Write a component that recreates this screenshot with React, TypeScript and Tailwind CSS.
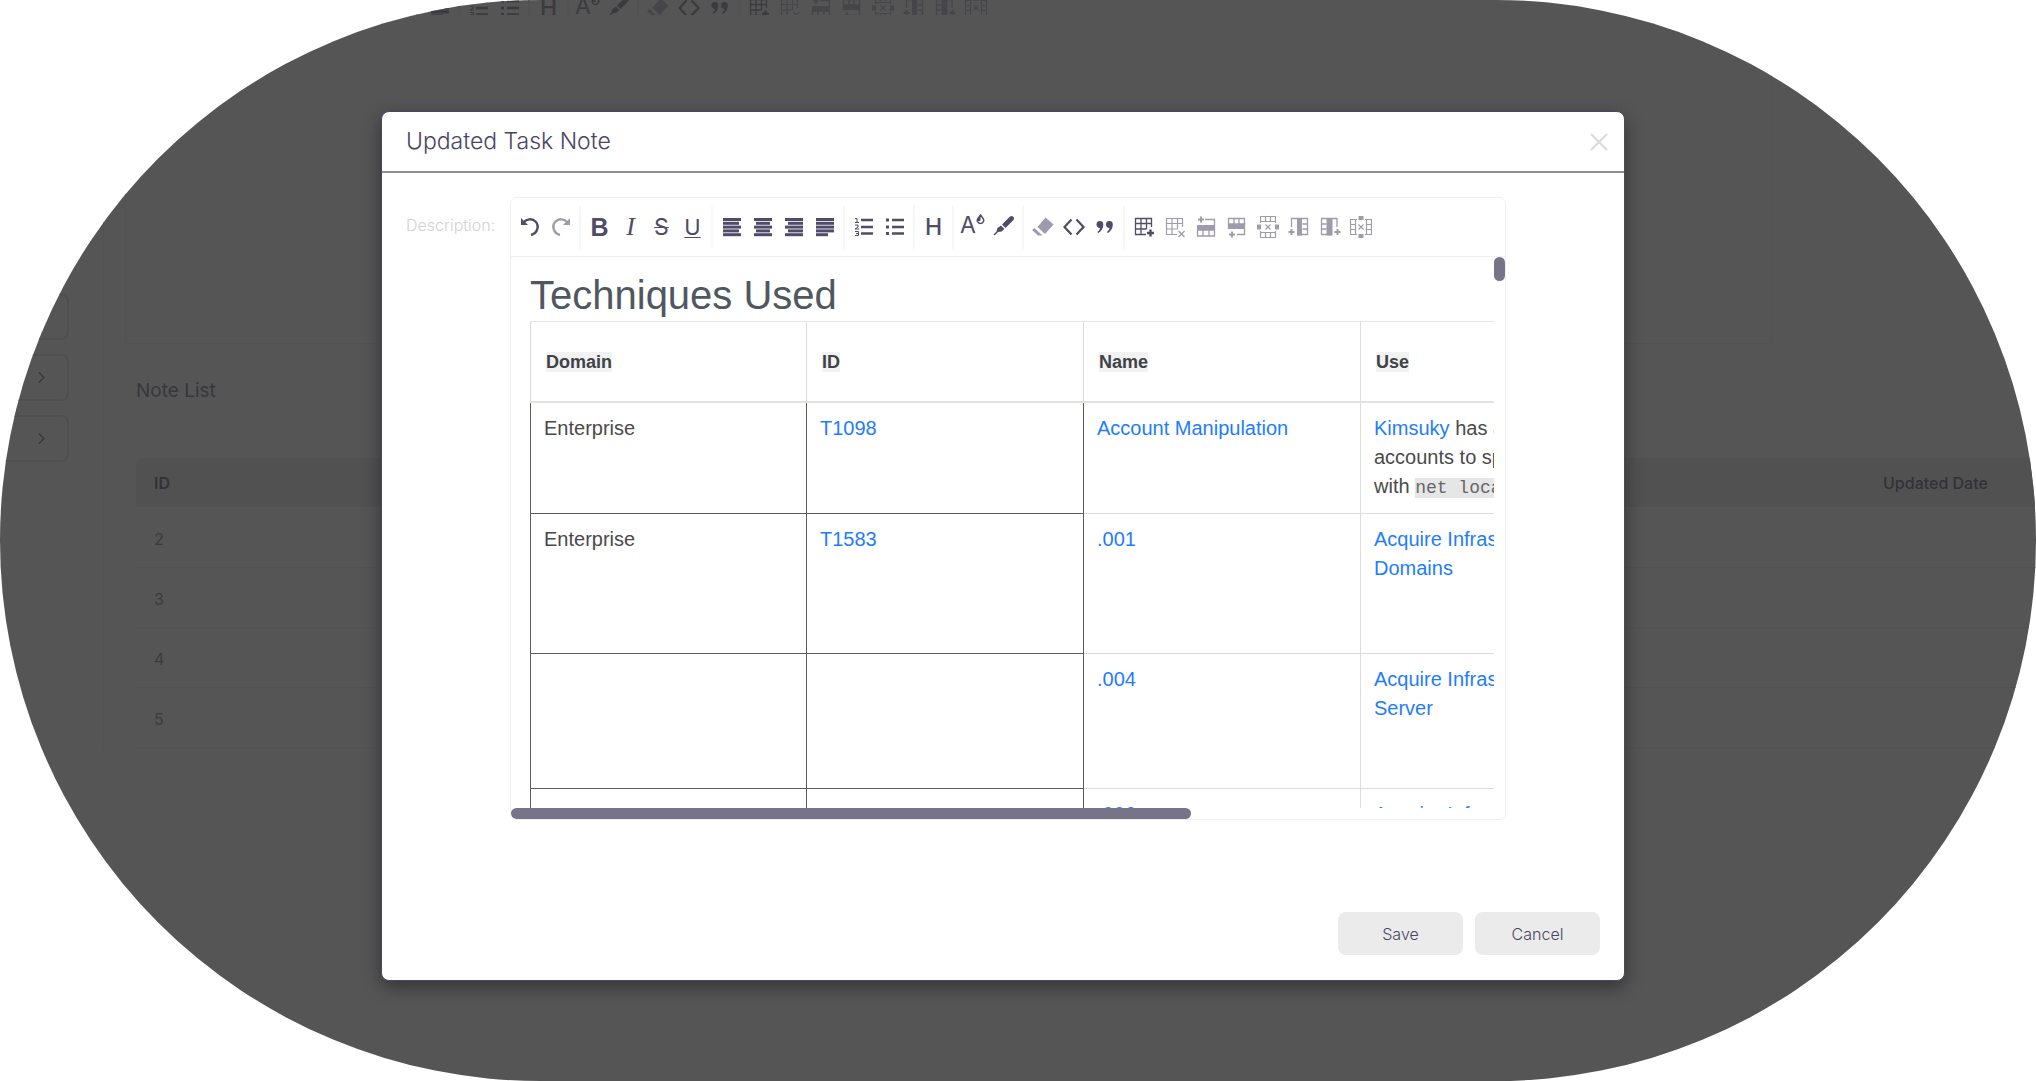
import { ReactNode } from "react";
import { ChevronRight } from "lucide-react";

interface Tool {
  name: string;
  icon: ReactNode;
  dim?: boolean;
}

const Svg = ({ children }: { children: ReactNode }) => (
  <svg width="22" height="22" viewBox="0 0 22 22" fill="none" stroke="currentColor" aria-hidden="true">
    {children}
  </svg>
);

// five stacked bars, each given as [x, width]
const Bars = ({ bars }: { bars: number[][] }) => (
  <Svg>
    {bars.map(([x, w], i) => (
      <rect key={i} x={x} y={2 + i * 3.8} width={w} height="3" fill="currentColor" stroke="none" />
    ))}
  </Svg>
);

const GROUPS: Tool[][] = [
  [
    {
      name: "Undo",
      icon: (
        <Svg>
          <path d="M2 2v7h7z" fill="currentColor" stroke="none" />
          <path d="M4.5 6.5C7.5 3 13 2 16.5 5.5s3 11.5-4.5 13.5" strokeWidth="2.4" />
        </Svg>
      ),
    },
    {
      name: "Redo",
      dim: true,
      icon: (
        <Svg>
          <path d="M20 2v7h-7z" fill="currentColor" stroke="none" />
          <path d="M17.5 6.5C14.5 3 9 2 5.5 5.5s-3 11.5 4.5 13.5" strokeWidth="2.4" />
        </Svg>
      ),
    },
  ],
  [
    { name: "Bold", icon: <span className="font-['Liberation_Sans'] text-[25px] font-bold">B</span> },
    { name: "Italic", icon: <span className="font-['Liberation_Serif'] text-[26px] italic">I</span> },
    { name: "Strike", icon: <span className="font-['Inter'] text-[23px] line-through decoration-1">S</span> },
    {
      name: "Underline",
      icon: <span className="font-['Inter'] text-[22px] underline decoration-1 underline-offset-2">U</span>,
    },
  ],
  [
    { name: "Align left", icon: <Bars bars={[[2, 18], [2, 16], [2, 18], [2, 16], [2, 18]]} /> },
    { name: "Align center", icon: <Bars bars={[[2, 18], [4, 14], [2, 18], [4, 14], [2, 18]]} /> },
    { name: "Align right", icon: <Bars bars={[[2, 18], [5, 15], [2, 18], [5, 15], [2, 18]]} /> },
    { name: "Justify", icon: <Bars bars={[[2, 18], [2, 18], [2, 18], [2, 18], [2, 12]]} /> },
  ],
  [
    {
      name: "Ordered list",
      icon: (
        <Svg>
          <path d="M8 4h12M8 11h12M8 17.5h12" strokeWidth="2.4" />
          <path d="M2 2.5h2v4M2 6.5h4M2 9h3v2L2 13h4M2 15.5h3.5v4H2M3 17.5h2" strokeWidth="1" />
        </Svg>
      ),
    },
    {
      name: "Unordered list",
      icon: (
        <Svg>
          <path d="M8 4h12M8 11h12M8 17.5h12" strokeWidth="2.4" />
          <path d="M2 4h3M2 11h3M2 17.5h3" strokeWidth="3" />
        </Svg>
      ),
    },
  ],
  [{ name: "Heading", icon: <span className="font-['Inter'] text-[23px] font-medium">H</span> }],
  [
    {
      name: "Font size",
      icon: (
        <span className="flex items-start pb-1 font-['Inter'] text-[23px]">
          A
          <svg width="9" height="11" viewBox="0 0 9 11" fill="none" stroke="currentColor" strokeWidth="1.5">
            <path d="M4.5 1 7.3 4.8a3.2 3.2 0 1 1-5.600 0z" />
            <path d="M4.500 1v6H1.500V5z" fill="currentColor" stroke="none" />
          </svg>
        </span>
      ),
    },
    {
      name: "Text color",
      icon: (
        <Svg>
          <path
            d="M19 0c2 .5 2.5 2.500 1.500 4L12.500 12 9 8.500 16.500 1c.7-.7 1.500-1 2.500-1zM8 9.500l3.500 3.500-3 2.500-3.500.500L1.500 19.500l-1-1 3-3 1-3.500z"
            fill="currentColor"
            stroke="none"
          />
        </Svg>
      ),
    },
  ],
  [
    {
      name: "Clear format",
      dim: true,
      icon: (
        <Svg>
          <path d="M13.5 1.5 21.5 8.5 13 18 5.5 11z" fill="currentColor" stroke="none" />
          <path d="M0 14l2.5-2 8 7.5h-4.5z" fill="currentColor" stroke="none" />
        </Svg>
      ),
    },
    {
      name: "Code",
      icon: (
        <Svg>
          <path d="M8.5 3.500 1.5 11l7 7.500M13.5 3.500l7 7.500-7 7.500" strokeWidth="2.2" />
        </Svg>
      ),
    },
    {
      name: "Quote",
      icon: (
        <Svg>
          <path
            d="M2.500 8.5a3.4 3.4 0 1 1 6.8 0c0 4-2 6.5-5 8.5l-1-1c2-1.5 2.600-2.800 2.600-4-1.900 0-3.400-1.500-3.400-3.500zM12 8.5a3.4 3.4 0 1 1 6.8 0c0 4-2 6.5-5 8.5l-1-1c2-1.5 2.600-2.800 2.600-4-1.900 0-3.400-1.500-3.400-3.500z"
            fill="currentColor"
            stroke="none"
          />
        </Svg>
      ),
    },
  ],
  [
    {
      name: "Insert table",
      icon: (
        <Svg>
          <path d="M18.500 11V2.5H2.5v16H13M2.5 7.5H19M2.5 13h11M8 2.5v16M13.5 2.5V13" strokeWidth="1.3" />
          <path d="M17.500 13.500v7M14 17h7" strokeWidth="2.4" />
        </Svg>
      ),
    },
    {
      name: "Delete table",
      dim: true,
      icon: (
        <Svg>
          <path d="M18.500 11V2.5H2.5v16H13M2.5 7.5H19M2.5 13h11M8 2.5v16M13.5 2.5V13" strokeWidth="1.2" />
          <path d="M14.5 15l6 6M20.5 15l-6 6" strokeWidth="1.4" />
        </Svg>
      ),
    },
    {
      name: "Row above",
      dim: true,
      icon: (
        <Svg>
          <path d="M2 9h18v5H2z" fill="currentColor" stroke="none" />
          <path d="M10 3.5h9.5V20h-17v-7M2.5 14h17M8 14v6M14 14v6" strokeWidth="1.3" />
          <path d="M6 .5v6M3 3.5h6" strokeWidth="2" />
        </Svg>
      ),
    },
    {
      name: "Row below",
      dim: true,
      icon: (
        <Svg>
          <path d="M2 8h17v5H2z" fill="currentColor" stroke="none" />
          <path d="M2.5 13V2.5h16V18.5H11M2.5 8h17M8 2.5v6M13 2.5v6" strokeWidth="1.3" />
          <path d="M6 15.5v6M3 18.5h6" strokeWidth="2" />
        </Svg>
      ),
    },
    {
      name: "Remove row",
      dim: true,
      icon: (
        <Svg>
          <path
            d="M3.5 7V.5h15V7M3.5 5.5h15M3.5 15v6.5h15V15M3.5 16.5h15M8.5 1v5M13.5 1v5M8.5 16v5M13.5 16v5"
            strokeWidth="1.2"
          />
          <path d="M8.5 8.5l5 5M13.5 8.5l-5 5" strokeWidth="1.2" />
          <path d="M0 11h4M18 11h4" strokeWidth="5" />
        </Svg>
      ),
    },
    {
      name: "Column left",
      dim: true,
      icon: (
        <Svg>
          <path d="M9 2.5h5v17H9z" fill="currentColor" stroke="none" />
          <path d="M3.5 11V2.5h16v16H9M14.5 8h5M14.5 13h5" strokeWidth="1.3" />
          <path d="M3.5 13v6M.5 16h6" strokeWidth="2" />
        </Svg>
      ),
    },
    {
      name: "Column right",
      dim: true,
      icon: (
        <Svg>
          <path d="M7.5 2.5h6v17h-6z" fill="currentColor" stroke="none" />
          <path d="M18 11V2.5H2.5v16H13M2.5 8h5M2.5 13h5" strokeWidth="1.3" />
          <path d="M18.5 13v6M15.5 16h6" strokeWidth="2" />
        </Svg>
      ),
    },
    {
      name: "Remove column",
      dim: true,
      icon: (
        <Svg>
          <path
            d="M7 3.5H.5v15H7M5.5 3.5v15M15 3.5h6.5v15H15M16.5 3.5v15M1 8.5h5M1 13.5h5M16 8.5h5M16 13.5h5"
            strokeWidth="1.2"
          />
          <path d="M8.5 8.5l5 5M13.5 8.5l-5 5" strokeWidth="1.2" />
          <path d="M11 0v4M11 18v4" strokeWidth="5" />
        </Svg>
      ),
    },
  ],
];

function Toolbar({ shaded = false }: { shaded?: boolean }) {
  const normal = shaded ? "text-[#3a3a3f]" : "text-[#504b69]";
  const dimmed = shaded ? "text-[#46464a]" : "text-[#9f9bac]";

  return (
    <div className="flex h-[58px] shrink-0 items-center pl-[3px]">
      {GROUPS.map((group, i) => (
        <div key={i} className="flex items-center">
          {i > 0 && <div className={`mx-[3px] h-11 w-[2px] ${shaded ? "bg-[#525252]" : "bg-[#f7f7f8]"}`} />}
          {group.map((tool) => (
            <button
              key={tool.name}
              type="button"
              aria-label={tool.name}
              className={`flex h-8 w-[31px] items-center justify-center leading-none ${tool.dim ? dimmed : normal}`}
            >
              {tool.icon}
            </button>
          ))}
        </div>
      ))}
    </div>
  );
}

const HEADERS = ["Domain", "ID", "Name", "Use"];

const link = (text: ReactNode) => (
  <a href="#" className="text-[#1f7cff]">
    {text}
  </a>
);

const TECHNIQUES: { height: string; cells: ReactNode[] }[] = [
  {
    height: "h-[111px]",
    cells: [
      "Enterprise",
      link("T1098"),
      link("Account Manipulation"),
      <>
        {link("Kimsuky")} has added
        <br />
        accounts to specific groups
        <br />
        with <code className="bg-[#e6e6e6] font-['Liberation_Mono'] text-lg leading-5 text-[#666]">net localgroup</code>
      </>,
    ],
  },
  {
    height: "h-[140px]",
    cells: ["Enterprise", link("T1583"), link(".001"), link(<>Acquire Infrastructure:<br />Domains</>)],
  },
  {
    height: "h-[135px]",
    cells: ["", "", link(".004"), link(<>Acquire Infrastructure:<br />Server</>)],
  },
  {
    height: "h-[135px]",
    cells: ["", "", link(".006"), link(<>Acquire Infrastructure:<br />Web Services</>)],
  },
];

// the first two columns carry the dark rules, the others the light ones
const CELL_BORDERS = [
  "border-x border-b border-[#5c5c5c]",
  "border-r border-b border-[#5c5c5c]",
  "border-r border-b border-[#dcdcdc]",
  "border-r border-b border-[#dcdcdc]",
];

function TechniquesTable() {
  return (
    <table className="w-[1108px] table-fixed border-separate border-spacing-0 text-xl leading-[29px] text-[#4a4a4a]">
      <thead>
        <tr className="h-[82px]">
          {HEADERS.map((h) => (
            <th
              key={h}
              className="border-t border-r border-b-2 border-t-[#e6e6e6] border-r-[#dcdcdc] border-b-[#dfe3e8] px-[15px] text-left text-lg font-bold text-[#3f4247] first:border-l first:border-l-[#dcdcdc]"
            >
              <span className="bg-[#f2f2f2]">{h}</span>
            </th>
          ))}
        </tr>
      </thead>
      <tbody>
        {TECHNIQUES.map((row, i) => (
          <tr key={i} className={row.height}>
            {row.cells.map((cell, j) => (
              <td key={j} className={`px-[13px] pt-[11px] align-top whitespace-nowrap ${CELL_BORDERS[j]}`}>
                {cell}
              </td>
            ))}
          </tr>
        ))}
      </tbody>
    </table>
  );
}

function Editor() {
  return (
    <div className="w-[996px] overflow-hidden rounded-md border border-[#f0f0f3]">
      <Toolbar />
      <div className="flex h-[552px] border-t border-[#f0f0f3]">
        <div
          role="textbox"
          aria-multiline="true"
          aria-labelledby="description-label"
          className="flex-1 overflow-hidden pt-4 pl-[19px] font-['Liberation_Sans',sans-serif]"
        >
          <h1 className="h-12 text-[40px] leading-[44px] text-[#4f5861]">Techniques Used</h1>
          <TechniquesTable />
        </div>
        <div className="w-[11px] shrink-0">
          <div className="h-6 rounded-full bg-[#777388]" />
        </div>
      </div>
      <div className="h-[11px]">
        <div className="h-full w-[680px] rounded-full bg-[#777388]" />
      </div>
    </div>
  );
}

function NoteDialog() {
  return (
    <div
      role="dialog"
      aria-labelledby="dialog-title"
      className="flex w-full max-w-[1244px] flex-col overflow-hidden rounded-lg border border-[#4a4663] bg-white shadow-[0_6px_18px_rgba(0,0,0,0.4)]"
    >
      <header className="flex h-[61px] items-center justify-between border-b-2 border-[#8e8e8e] pr-4 pl-6">
        <h2 id="dialog-title" className="text-[23px] font-light text-[#4a4463]">
          Updated Task Note
        </h2>
        <button type="button" aria-label="Close" className="text-[#dcdcdc]">
          <svg width="18" height="18" viewBox="0 0 18 18" stroke="currentColor" strokeWidth="2.2">
            <path d="M1 1l16 16M17 1L1 17" />
          </svg>
        </button>
      </header>

      <div className="flex items-start pt-6 pl-6">
        <span id="description-label" className="w-[104px] shrink-0 pt-4 text-base font-light text-[#d2d2d2]">
          Description:
        </span>
        <Editor />
      </div>

      <footer className="mt-[92px] flex justify-end gap-3 px-6 pb-[25px]">
        {["Save", "Cancel"].map((label) => (
          <button
            key={label}
            type="button"
            className="h-[43px] w-[125px] rounded-lg bg-[#ebebeb] text-base font-light text-[#4a4463]"
          >
            {label}
          </button>
        ))}
      </footer>
    </div>
  );
}

function NotesPage() {
  return (
    <div className="flex text-[#3b3b3f]" aria-hidden="true">
      <aside className="flex w-[104px] shrink-0 flex-col gap-[14px] border-r border-[#525252] pt-[293px] pr-[34px]">
        {[0, 1, 2].map((n) => (
          <div
            key={n}
            className="flex h-[47px] items-center justify-end rounded-r-lg border-2 border-l-0 border-[#4f4f4f] pr-4"
          >
            {n > 0 && <ChevronRight size={19} strokeWidth={2} />}
          </div>
        ))}
      </aside>

      <main className="min-w-0 flex-1">
        <div className="mr-[264px] ml-[21px] flex h-[344px] flex-col border border-t-0 border-[#525252]">
          <div className="flex h-[15px] shrink-0 flex-col justify-end overflow-hidden">
            <div className="-mb-[22px]">
              <Toolbar shaded />
            </div>
          </div>
        </div>

        <div className="pl-8">
          <h2 className="pt-[33px] text-[19px] leading-7 text-[#37373c]">Note List</h2>
          <table className="mt-[53px] w-full table-fixed text-left text-base">
            <thead>
              <tr className="h-[49px] bg-[#515151] text-[#313137]">
                <th className="w-[73%] rounded-tl-lg pl-[18px] font-semibold">ID</th>
                <th className="w-[18%] pl-[18px] font-medium">Created By</th>
                <th className="w-[9%] pl-[18px] font-medium">Updated Date</th>
              </tr>
            </thead>
            <tbody>
              {[2, 3, 4, 5].map((id) => (
                <tr key={id} className="h-[60px] border-b border-[#525252]">
                  <td className="pt-1 pl-[18px]">{id}</td>
                  <td />
                  <td />
                </tr>
              ))}
            </tbody>
          </table>
        </div>
      </main>
    </div>
  );
}

export default function App() {
  return (
    <div className="min-h-screen bg-white font-['Inter',sans-serif]">
      <div className="relative min-h-screen overflow-hidden rounded-full bg-[#555555]">
        <NotesPage />
        <div className="absolute inset-0 flex items-start justify-center pt-[111px] pr-[30px]">
          <NoteDialog />
        </div>
      </div>
    </div>
  );
}
